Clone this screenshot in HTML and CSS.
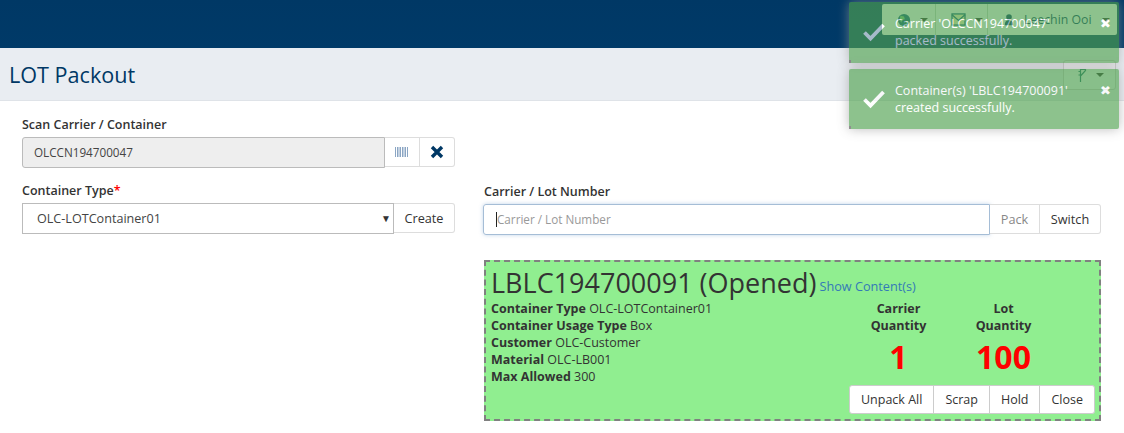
FILE: index.html
```html
<!DOCTYPE html>
<html lang="en">
<head>
<meta charset="utf-8">
<title>LOT Packout</title>
<link rel="stylesheet" href="styles.css">
</head>
<body>
<header class="topbar">
  <div class="navgroup">
    <div class="navitem nav-globe">
      <svg class="ico" viewBox="0 0 16 16" width="14" height="14"><circle cx="8" cy="8" r="7" fill="#0b5a7a"/><path d="M4 3l4 1 1 3-3 1-1 3-2-3zM10 9l3 0-2 4z" fill="#7cc47c"/></svg>
      <span class="caret"></span>
    </div>
    <div class="navitem nav-mail">
      <svg class="ico" viewBox="0 0 16 14" width="15" height="13"><rect x="1" y="1" width="14" height="12" fill="#fdf3c0" stroke="#0b5a7a" stroke-width="1.4"/><path d="M1 2l7 6 7-6" fill="none" stroke="#0b5a7a" stroke-width="1.4"/></svg>
      <span class="caret"></span>
    </div>
    <div class="navitem nav-user">
      <svg class="ico" viewBox="0 0 12 14" width="10" height="13"><circle cx="6" cy="4" r="3.4" fill="#003865"/><path d="M1 14c0-5 2-6 5-6s5 1 5 6z" fill="#003865"/></svg>
      <span class="username">Leechin Ooi</span>
      <span class="caret"></span>
    </div>
  </div>
</header>
<section class="titlebar">
  <h1 class="title">LOT Packout</h1>
  <button class="pinbtn" type="button" aria-label="Pin">
    <svg viewBox="0 0 10 16" width="10" height="16"><path d="M3.5 15V2.5h5v1L3.5 9M1.5 4.5h2M1.5 8h2" fill="none" stroke="#1c6f6a" stroke-width="1.2"/></svg>
    <span class="caret"></span>
  </button>
</section>
<main class="content">
  <div class="col-left">
    <div class="field">
      <label class="label">Scan Carrier / Container</label>
      <div class="group">
        <div class="control readonly">OLCCN194700047</div>
        <button class="addon barcode" type="button" aria-label="Barcode">
          <svg viewBox="0 0 14 10" width="14" height="10"><path d="M0.5 0v10M2.5 0v10M4 0v10M5.5 0v10M7.5 0v10M9 0v10M10.5 0v10M12.5 0v10" stroke="#8ba6c4" stroke-width="1" fill="none"/></svg>
        </button>
        <button class="addon clear" type="button" aria-label="Clear">
          <svg viewBox="0 0 14 14" width="14" height="14"><path d="M2 2l10 10M12 2L2 12" stroke="#003865" stroke-width="3.4" fill="none"/></svg>
        </button>
      </div>
    </div>
    <div class="field">
      <label class="label">Container Type<span class="req">*</span></label>
      <div class="group">
        <div class="control select"><span>OLC-LOTContainer01</span><span class="select-arrow">▼</span></div>
        <button class="addon text-btn" type="button">Create</button>
      </div>
    </div>
  </div>
  <div class="col-right">
    <div class="field">
      <label class="label">Carrier / Lot Number</label>
      <div class="group">
        <div class="control focus"><span class="cursor"></span><span class="placeholder">Carrier / Lot Number</span></div>
        <button class="addon text-btn muted" type="button">Pack</button>
        <button class="addon text-btn" type="button">Switch</button>
      </div>
    </div>
    <div class="card">
      <div class="card-head"><span class="card-id">LBLC194700091 (Opened)</span> <a class="card-link">Show Content(s)</a></div>
      <div class="card-body">
        <ul class="props">
          <li><b>Container Type</b> OLC-LOTContainer01</li>
          <li><b>Container Usage Type</b> Box</li>
          <li><b>Customer</b> OLC-Customer</li>
          <li><b>Material</b> OLC-LB001</li>
          <li><b>Max Allowed</b> 300</li>
        </ul>
        <div class="qtys">
          <div class="qty"><div class="qty-label">Carrier<br>Quantity</div><div class="qty-num">1</div></div>
          <div class="qty"><div class="qty-label">Lot<br>Quantity</div><div class="qty-num">100</div></div>
        </div>
      </div>
      <div class="card-actions">
        <button class="act" type="button">Unpack All</button>
        <button class="act" type="button">Scrap</button>
        <button class="act" type="button">Hold</button>
        <button class="act" type="button">Close</button>
      </div>
    </div>
  </div>
</main>
<div class="toasts">
  <div class="toast">
    <svg class="check" viewBox="0 0 24 20" width="24" height="20"><path d="M2.5 10.5l6 6L21.5 3" fill="none" stroke="#fff" stroke-width="3.8"/></svg>
    <div class="toast-msg">Carrier 'OLCCN194700047'<br>packed successfully.</div>
    <span class="toast-x">✖</span>
  </div>
  <div class="toast">
    <svg class="check" viewBox="0 0 24 20" width="24" height="20"><path d="M2.5 10.5l6 6L21.5 3" fill="none" stroke="#fff" stroke-width="3.8"/></svg>
    <div class="toast-msg">Container(s) 'LBLC194700091'<br>created successfully.</div>
    <span class="toast-x">✖</span>
  </div>
</div>
</body>
</html>
```
FILE: styles.css
```css
* { box-sizing: border-box; }
html, body { margin: 0; padding: 0; }
body {
  width: 1124px;
  height: 433px;
  overflow: hidden;
  background: #fff;
  color: #333;
  font: 12.5px/17px "Open Sans", sans-serif;
  position: relative;
}
.topbar {
  height: 48px;
  background: linear-gradient(#003865, #003a68);
  display: flex;
  justify-content: flex-end;
  padding: 4px 7px 0 0;
}
.navgroup {
  width: 235px;
  height: 31px;
  background: #fff;
  border-radius: 2px;
  display: flex;
}
.navitem {
  display: flex;
  align-items: center;
  gap: 9px;
  padding-left: 15px;
  border-right: 1px solid #c8d4c8;
}
.nav-globe { width: 54px; }
.nav-mail { width: 52px; }
.nav-user { flex: 1; border-right: 0; gap: 10px; padding-left: 16px; }
.username { font-size: 12.3px; color: #003865; }
.caret {
  width: 0; height: 0;
  border-left: 4px solid transparent;
  border-right: 4px solid transparent;
  border-top: 4px solid #333;
}
.nav-user .caret { margin-left: 0; }
.titlebar {
  height: 53px;
  background: #e9edf2;
  border-bottom: 1px solid #dfe3e8;
  display: flex;
  align-items: center;
  justify-content: space-between;
  padding: 0 8px 0 9px;
}
.title {
  margin: 2px 0 0;
  font-size: 21.6px;
  line-height: 30px;
  font-weight: 400;
  color: #003865;
}
.pinbtn {
  width: 53px;
  height: 30px;
  margin-top: 1px;
  background: #f2f4f6;
  border: 1px solid #ccc;
  border-radius: 3px;
  display: flex;
  align-items: center;
  justify-content: center;
  gap: 9px;
  padding: 0 0 0 2px;
}
.content {
  display: flex;
  padding: 15px 23px 0 22px;
  gap: 28px;
  align-items: flex-start;
}
.col-left { width: 433px; }
.col-right { width: 618px; }
.field { margin-bottom: 14px; }
.col-right .field { margin-top: 67px; margin-bottom: 25px; }
.label {
  display: block;
  font-weight: 600;
  font-size: 12.5px;
  line-height: 17px;
  margin-bottom: 4px;
}
.col-right .label { margin-left: 1px; }
.req { color: #f00; }
.group { display: flex; height: 31px; }
.control {
  flex: 1;
  min-width: 0;
  height: 31px;
  border: 1px solid #bbb;
  display: flex;
  align-items: center;
  padding-left: 11px;
  font-size: 11.7px;
  color: #444;
}
.readonly { background: #eee; border-radius: 3px 0 0 3px; }
.select { justify-content: space-between; padding: 0 2px 0 14px; font-size: 12.6px; }
.select-arrow { font-size: 10px; color: #333; }
.focus {
  padding-left: 12px;
  border: 1px solid #a5bdd6;
  border-radius: 3px 0 0 3px;
  box-shadow: 0 0 4px rgba(102,150,200,.4);
}
.cursor { width: 1px; height: 15px; background: #222; }
.placeholder { color: #999; font-size: 11.7px; }
.addon {
  background: #fff;
  border: 1px solid #ddd;
  border-left: 0;
  height: 30px;
  padding: 0;
  font: 12.7px/17px "Open Sans", sans-serif;
  color: #333;
  display: flex;
  align-items: center;
  justify-content: center;
}
.addon:last-child { border-radius: 0 3px 3px 0; }
.barcode { width: 35px; }
.clear { width: 35px; }
.text-btn { width: 61px; }
.muted { color: #888; width: 50px; }
.col-right .text-btn:last-child { width: 61px; }
.card {
  height: 161px;
  margin-left: 1px;
  background: #90ee90;
  border: 2px dashed #808080;
  padding: 4px 4px 0 5px;
  display: flex;
  flex-direction: column;
}
.card-head { display: flex; align-items: flex-start; gap: 3px; height: 34px; }
.card-id { font-size: 27px; line-height: 33px; color: #333; }
.card-link { color: #337ab7; font-size: 12.7px; margin-top: 12px; }
.card-body { display: flex; justify-content: space-between; }
.props { list-style: none; margin: 0; padding: 0; }
.props b, .qty-label { font-weight: 700; }
.qtys { display: flex; margin-right: 39px; }
.qty { width: 105px; text-align: center; }
.qty-num { font-size: 32px; line-height: 40px; color: #f00; font-weight: 700; margin-top: 3px; }
.card-actions {
  display: flex;
  justify-content: flex-end;
  margin-top: 0;
}
.act {
  background: #fff;
  border: 1px solid #ccc;
  border-left-width: 0;
  height: 29px;
  padding: 0 11px;
  font: 12.5px/17px "Open Sans", sans-serif;
  color: #333;
}
.act:first-child { border-left-width: 1px; border-radius: 3px 0 0 3px; }
.act:last-child { border-radius: 0 3px 3px 0; }
.toasts {
  position: absolute;
  top: 2px;
  left: 849px;
  width: 270px;
  display: flex;
  flex-direction: column;
  gap: 6px;
}
.toast {
  position: relative;
  height: 60.5px;
  background: #51a351;
  opacity: .65;
  border-radius: 2px;
  box-shadow: 0 0 12px #999;
  color: #fff;
  display: flex;
  align-items: center;
  padding-left: 13px;
}
.toast::after {
  content: "";
  position: absolute;
  left: 0;
  bottom: 0;
  width: 2px;
  height: 3px;
  background: #555;
}
.check { flex: none; }
.toast-msg { margin-left: 9px; font-size: 12.5px; line-height: 17px; }
.toast-x { position: absolute; right: 8px; top: 14px; font-size: 13px; line-height: 14px; }
```
